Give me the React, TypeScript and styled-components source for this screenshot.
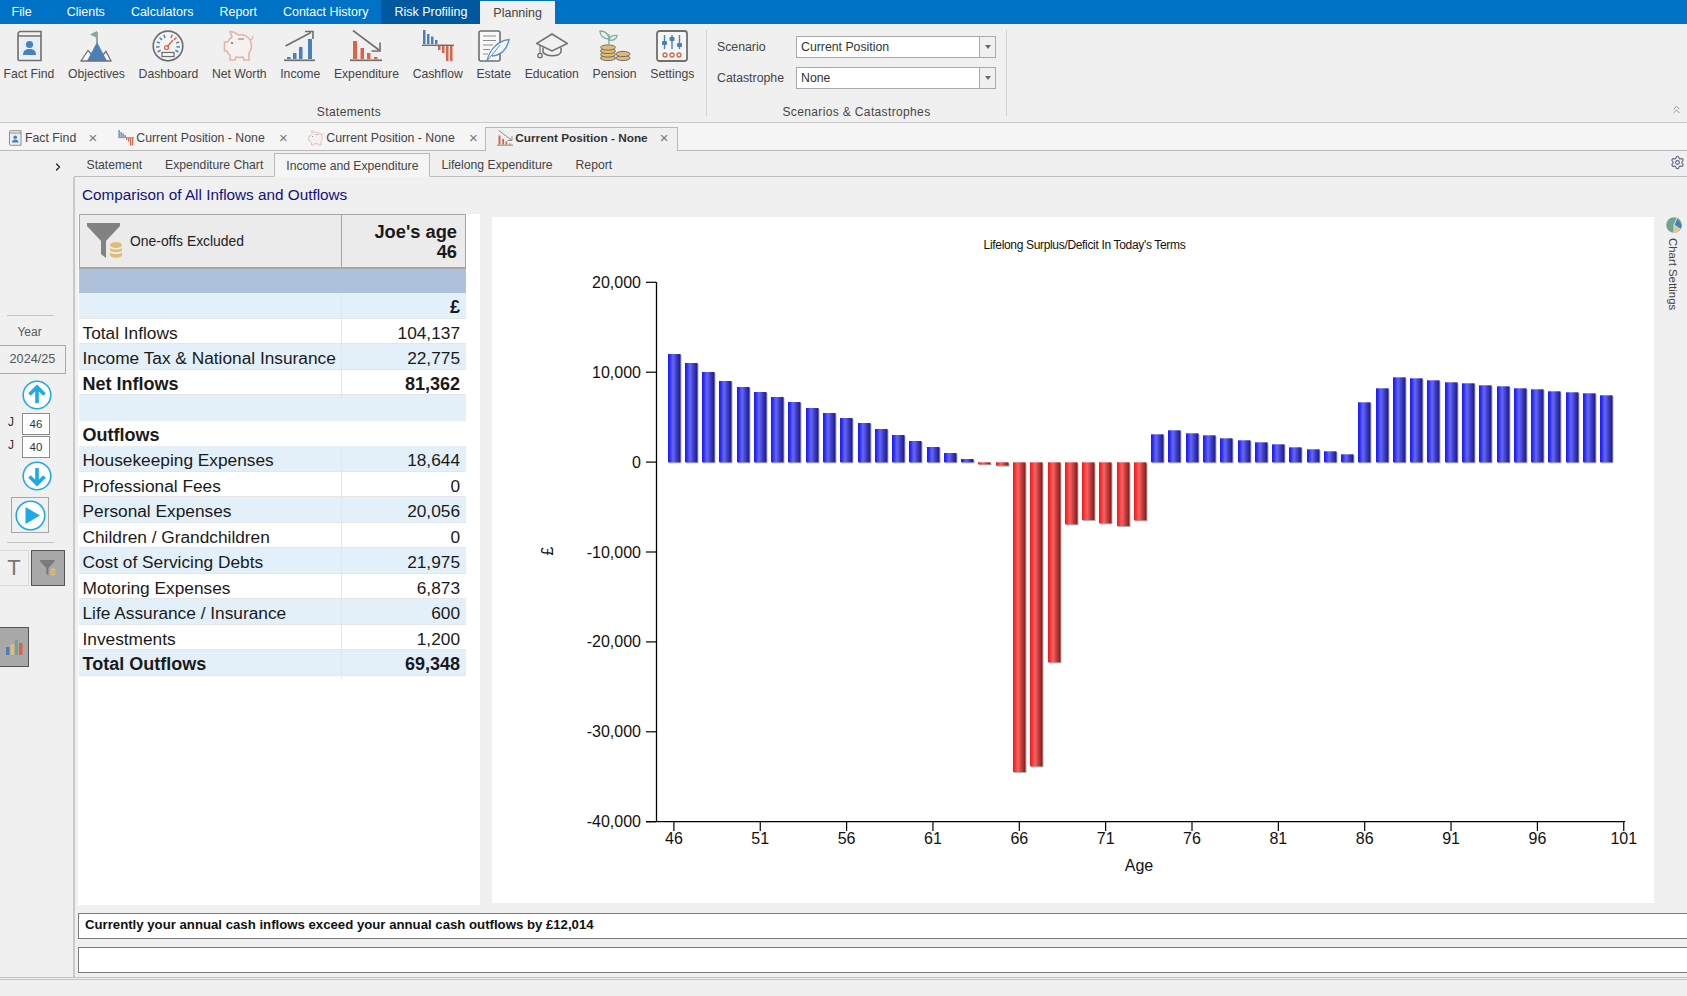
import React from 'react';
import styled, { createGlobalStyle } from 'styled-components';
import { ChevronRight, ChevronsUp, Settings as Gear } from 'lucide-react';

const Global = createGlobalStyle`
  html, body { margin: 0; padding: 0; background: #f0f0f0; overflow: hidden; }
  * { box-sizing: border-box; }
  body { font-family: "Liberation Sans", Arial, sans-serif; }
`;

const G = '#6f6f6f';
const B = '#4a80ba';
const R = '#d9644a';
const T = '#e2bb72';

type IP = { size?: number };
const Svg = ({ size = 32, children }: IP & { children: React.ReactNode }) => (
  <svg width={size} height={size} viewBox="0 0 32 32" fill="none" style={{ display: 'block', flex: 'none' }}>{children}</svg>
);

const FactFindIcon = ({ size }: IP) => (
  <Svg size={size}>
    <rect x="8" y="7" width="18" height="20" fill="#e6eef7" />
    <path d="M5 5.5V29a1.5 1.5 0 0 0 1.5 1.5H28V6H7.5A2.3 2.3 0 0 1 5 4a2.5 2.5 0 0 1 2.5-2.5H28V6" stroke={G} strokeWidth="1.6" />
    <circle cx="16.5" cy="14.5" r="3.6" fill={B} />
    <path d="M10 25c0-4.500 3-6 6.500-6s6.500 1.500 6.500 6z" fill={B} />
  </Svg>
);
const ObjectivesIcon = ({ size }: IP) => (
  <Svg size={size}>
    <path d="M17 2v11" stroke={G} strokeWidth="1.2" />
    <path d="M17 1L10 4.500L17 8z" fill="#7fa99a" />
    <path d="M1 31L8 20.500L12 25" fill="#fff" stroke={G} strokeWidth="1.3" />
    <path d="M31 31L26 21.500L23 25" fill="#fff" stroke={G} strokeWidth="1.3" />
    <path d="M17 12L7 31H27z" fill={B} />
    <path d="M0.500 31H31.500" stroke={G} strokeWidth="1.5" />
  </Svg>
);
const DashboardIcon = ({ size }: IP) => (
  <Svg size={size}>
    <circle cx="16" cy="16" r="14.800" fill="#f4f4f4" stroke={G} strokeWidth="1.7" />
    {[-120, -95, -70, -45, -20, 20, 45, 70, 95, 120].map((a) => (
      <path key={a} d="M16 4V7.500" stroke={a > 10 && a < 60 ? R : B} strokeWidth="1.5" transform={`rotate(${a} 16 16)`} />
    ))}
    <path d="M15 17L21 10" stroke={R} strokeWidth="1.4" />
    <circle cx="14.500" cy="17.500" r="2" stroke={R} strokeWidth="1.2" />
    <rect x="10" y="22.500" width="12" height="4" stroke={G} strokeWidth="1.3" fill="#fff" />
  </Svg>
);
const PiggyIcon = ({ size }: IP) => (
  <Svg size={size}>
    <path d="M1.500 12H4.500C5.500 10 7 8 9 7L7 1.500C10 1.500 13 3 15 5C20 4 25 6 27 10C29 14 29 19 26 23V30H21L20 27C18 27.500 15 27.500 13 27L12 30H7V25C5.500 24 4.500 22.500 4 21H1.500Z" stroke="#e4b2ae" strokeWidth="1.6" fill="#f6f0ef" />
    <path d="M15 9H21" stroke="#8a8a8a" strokeWidth="1.2" />
    <circle cx="9" cy="13" r="1" fill={G} />
    <path d="M27 10C29 10 30 8 29.500 6" stroke="#e4b2ae" strokeWidth="1.4" />
  </Svg>
);
const IncomeIcon = ({ size }: IP) => (
  <Svg size={size}>
    <path d="M1.500 16L27 2.500" stroke={G} strokeWidth="1.6" />
    <path d="M21 1.500H29V9" stroke={G} strokeWidth="1.6" />
    <rect x="3" y="27" width="3.500" height="2" fill={B} />
    <rect x="9" y="23" width="3.500" height="6" fill={B} />
    <rect x="15" y="17" width="3.500" height="12" fill={B} />
    <rect x="24" y="9" width="4" height="20" fill={B} />
    <path d="M0 30.300H31" stroke={G} strokeWidth="1.700" />
  </Svg>
);
const ExpenditureIcon = ({ size }: IP) => (
  <Svg size={size}>
    <path d="M3 0.500L29 20" stroke={G} strokeWidth="1.6" />
    <path d="M30 12.500V21H21.500" stroke={G} strokeWidth="1.6" />
    <rect x="3" y="11" width="4" height="18" fill={R} />
    <rect x="10.500" y="18" width="3.500" height="11" fill={R} />
    <rect x="17" y="23" width="3.500" height="6" fill={R} />
    <rect x="24" y="27" width="3.500" height="2" fill={R} />
    <path d="M0 30.300H32" stroke={G} strokeWidth="1.700" />
  </Svg>
);
const CashflowIcon = ({ size }: IP) => (
  <Svg size={size}>
    <rect x="1" y="0" width="2.500" height="14" fill={B} />
    <rect x="5" y="4" width="2.500" height="10" fill={B} />
    <rect x="9" y="6.500" width="2.500" height="7.500" fill={B} />
    <rect x="13" y="10" width="2.500" height="4" fill={B} />
    <path d="M0 15.300H32" stroke={G} strokeWidth="1.500" />
    <rect x="16" y="16" width="2.500" height="4" fill={R} />
    <rect x="20" y="16" width="2.500" height="7" fill={R} />
    <rect x="24" y="16" width="2.500" height="15" fill={R} />
    <rect x="28" y="16" width="2.500" height="15" fill={R} />
  </Svg>
);
const EstateIcon = () => (
  <Svg>
    <rect x="1" y="1" width="21" height="30" rx="2" stroke={G} strokeWidth="1.600" fill="#f8f8f8" />
    <path d="M5 6H18M5 10.500H18M5 15H15M5 19.500H12M5 24H10" stroke="#8c8c8c" strokeWidth="1.200" />
    <path d="M9 31C11 22 18 11 31 9.500C29 19 24 25 14 26" fill="#f4f7fb" stroke="#5a90c8" strokeWidth="1.300" />
    <path d="M9 31L22 15" stroke="#5a90c8" strokeWidth="1" />
  </Svg>
);
const EducationIcon = () => (
  <Svg>
    <path d="M16 4L31.500 13.500L16 21L0.500 13.500Z" stroke={G} strokeWidth="1.500" />
    <path d="M7 17.500V22C10 27 23 27 25 22V17.500" stroke={G} strokeWidth="1.500" />
    <path d="M4 15V23" stroke={G} strokeWidth="1.200" />
    <circle cx="4" cy="25.500" r="2.200" stroke={G} strokeWidth="1.300" />
  </Svg>
);
const Coin = ({ x, y, w }: { x: number; y: number; w: number }) => (
  <ellipse cx={x} cy={y} rx={w} ry="2.600" fill={T} stroke={G} strokeWidth="1" />
);
const PensionIcon = () => (
  <Svg>
    <path d="M10 14V4" stroke="#7fb09f" strokeWidth="1.400" />
    <path d="M10 9C10 4 6 1 1 1C1 5 4 9 10 9Z" stroke="#7fb09f" strokeWidth="1.400" />
    <path d="M10 10C10 7 14 5 18 5.500C18 9 14 11 10 10Z" stroke="#7fb09f" strokeWidth="1.400" />
    <Coin x={9} y={28} w={7.500} />
    <Coin x={9} y={24.500} w={7.500} />
    <Coin x={9} y={21} w={7.500} />
    <Coin x={9} y={17.500} w={7.500} />
    <Coin x={24} y={28} w={7} />
    <Coin x={24} y={24} w={7} />
  </Svg>
);
const SettingsIcon = () => (
  <Svg>
    <rect x="1" y="1" width="30" height="30" rx="2.500" stroke={G} strokeWidth="1.800" fill="#f6f6f6" />
    <path d="M8.500 5V19M16 5V19M23.500 5V19" stroke={B} strokeWidth="1.400" />
    <rect x="6" y="11" width="5" height="4" rx="1" fill={B} />
    <rect x="13.500" y="7" width="5" height="4" rx="1" fill={B} />
    <rect x="21" y="13" width="5" height="4" rx="1" fill={B} />
    <circle cx="9" cy="25" r="2" stroke={R} strokeWidth="1.300" />
    <circle cx="16" cy="25" r="2" stroke={R} strokeWidth="1.300" />
    <circle cx="23" cy="25" r="2" stroke={R} strokeWidth="1.300" />
  </Svg>
);

const FunnelIcon = ({ w, h, dark }: { w: number; h: number; dark?: boolean }) => (
  <svg width={w} height={h} viewBox="0 0 36 36" style={{ display: 'block', flex: 'none' }}>
    <path d="M0 0H33V3L19 18V35L14 31V18L0 3Z" fill={dark ? '#7a7a7a' : '#828282'} />
    <ellipse cx="29" cy="22" rx="6" ry="3" fill={T} />
    <path d="M23 25C25 27 33 27 35 25V27.500C33 29.500 25 29.500 23 27.500Z" fill={T} />
    <path d="M23 29.500C25 31.500 33 31.500 35 29.500V32.500C33 35.500 25 35.500 23 32.500Z" fill={T} />
  </svg>
);

const Root = styled.div`
  width: 1687px;
  height: 996px;
  display: flex;
  flex-direction: column;
  overflow: hidden;
  background: #f0f0f0;
  color: #333;
`;

const MenuBar = styled.nav`
  height: 24px;
  flex: none;
  background: #0072c6;
  display: flex;
  align-items: flex-end;
  font-size: 12.500px;
  color: #fff;
`;
const MenuItem = styled.div<{ $first?: boolean }>`
  height: 24px;
  line-height: 24px;
  padding: 0 13px;
  margin-left: ${(p) => (p.$first ? '-1.5px' : 0)};
  margin-right: ${(p) => (p.$first ? '9px' : 0)};
`;
const DarkMenu = styled(MenuItem)`
  background: #00589f;
  margin-left: 0;
`;
const ActiveMenu = styled(MenuItem)`
  height: 23px;
  line-height: 24px;
  background: #f0f0f0;
  color: #444;
`;

const Ribbon = styled.section`
  height: 99px;
  flex: none;
  display: flex;
  padding-top: 6px;
  background: #f0f0f0;
  border-bottom: 1px solid #c8c8c8;
  position: relative;
`;
const RibbonGroup = styled.div<{ $w: number }>`
  width: ${(p) => p.$w}px;
  height: 86px;
  display: flex;
  flex-direction: column;
  border-right: 1px solid #d2d2d2;
`;
const GroupBody = styled.div`
  flex: 1;
`;
const GroupLabel = styled.div<{ $shift?: number }>`
  font-size: 12px;
  line-height: 14px;
  height: 13px;
  text-align: center;
  color: #444;
  padding-right: ${(p) => p.$shift || 0}px;
  letter-spacing: 0.03em;
  transform: translateY(2px);
`;
const ButtonRow = styled.div`
  display: flex;
  gap: 13.700px;
  padding-left: 3.500px;
`;
const RibbonButton = styled.div`
  display: flex;
  flex-direction: column;
  align-items: center;
  font-size: 12.200px;
  line-height: 14px;
  color: #444;
  white-space: nowrap;
`;
const ButtonLabel = styled.span`
  margin-top: 5px;
`;
const FieldStack = styled.div`
  display: flex;
  flex-direction: column;
  gap: 9px;
  padding: 6px 0 0 10px;
`;
const Field = styled.div`
  display: flex;
  align-items: center;
  font-size: 12.300px;
  color: #444;
`;
const FieldLabel = styled.span`
  width: 79px;
`;
const Combo = styled.div`
  width: 200px;
  height: 22px;
  display: flex;
  background: #fff;
  border: 1px solid #a8a8a8;
  line-height: 20px;
  color: #333;
`;
const ComboText = styled.span`
  flex: 1;
  padding-left: 4px;
`;
const ComboArrow = styled.span`
  width: 16px;
  background: #f0f0f0;
  border-left: 1px solid #a8a8a8;
  display: flex;
  align-items: center;
  justify-content: center;
  &::before {
    content: '';
    border-left: 3px solid transparent;
    border-right: 3px solid transparent;
    border-top: 4px solid #666;
  }
`;
const Collapse = styled.div`
  position: absolute;
  right: 4px;
  bottom: 6px;
  color: #777;
  line-height: 0;
`;

const TabStrip = styled.div`
  height: 28px;
  flex: none;
  display: flex;
  align-items: flex-end;
  background: #f5f5f5;
  border-bottom: 1px solid #b8b8b8;
`;
const DocTab = styled.div<{ $first?: boolean }>`
  height: 23px;
  display: flex;
  align-items: center;
  padding: 0 ${(p) => (p.$first ? 12 : 11.500)}px 2px ${(p) => (p.$first ? 7 : 8)}px;
  font-size: 12.300px;
  color: #444;
  margin-right: 1px;
`;
const ActiveDocTab = styled(DocTab)`
  height: 24px;
  padding: 0 8px 3px 11px;
  margin-left: -5px;
  margin-bottom: -1px;
  background: #f0f0f0;
  border: 1px solid #b8b8b8;
  border-bottom: none;
  font-weight: bold;
  font-size: 11.800px;
  color: #333;
`;
const TabIcon = styled.span`
  width: 16px;
  margin-right: 2px;
  display: block;
`;
const Close = styled.span<{ $gap?: number }>`
  margin-left: ${(p) => p.$gap ?? 14}px;
  font-size: 15px;
  line-height: 14px;
  color: #777;
  font-weight: normal;
  width: 9px;
  text-align: center;
`;

const SubRow = styled.div`
  height: 26px;
  flex: none;
  display: flex;
  background: #f0f0f0;
`;
const ChevronSlot = styled.div`
  width: 74px;
  flex: none;
  padding: 8px 0 0 52px;
  color: #222;
`;
const SubTabs = styled.div`
  flex: 1;
  display: flex;
  align-items: flex-end;
  border-bottom: 1px solid #bdbdbd;
  font-size: 12.200px;
  color: #444;
  position: relative;
  padding-left: 1px;
`;
const SubTab = styled.div`
  height: 23px;
  line-height: 25px;
  padding: 0 11.500px;
`;
const ActiveSubTab = styled(SubTab)`
  height: 24px;
  margin: 0 -0.500px -1px;
  background: #f5f5f5;
  border: 1px solid #b8b8b8;
  border-bottom: 1px solid #f5f5f5;
  padding: 0 11px;
`;
const GearSlot = styled.div`
  position: absolute;
  right: 2px;
  top: 4px;
  color: #606a80;
  line-height: 0;
`;

const Body = styled.div`
  flex: 1;
  min-height: 0;
  display: flex;
`;
const Rail = styled.aside`
  width: 75px;
  flex: none;
  border-right: 2px solid #c9c9c9;
  display: flex;
  flex-direction: column;
  padding-top: 138px;
`;
const RailRule = styled.div<{ $top?: number }>`
  width: 47px;
  height: 1px;
  margin: ${(p) => p.$top || 0}px 0 0 7px;
  background: #c4c4c4;
`;
const YearLabel = styled.div`
  width: 59px;
  text-align: center;
  font-size: 12px;
  line-height: 14px;
  margin-top: 9px;
  color: #555;
`;
const YearBox = styled.div`
  width: 66px;
  height: 29px;
  margin-top: 6px;
  border: 1px solid #a8a8a8;
  border-left: none;
  text-align: center;
  font-size: 12.700px;
  line-height: 27px;
  color: #555;
`;
const RoundButton = styled.div<{ $top: number }>`
  margin: ${(p) => p.$top}px 0 0 22px;
  width: 30px;
  height: 30px;
`;
const AgeRows = styled.div`
  margin-top: 2px;
`;
const AgeRow = styled.div`
  display: flex;
  align-items: center;
  height: 23px;
  font-size: 12px;
  color: #333;
`;
const AgeLetter = styled.span`
  width: 22px;
  padding-left: 8px;
  margin-top: -3px;
`;
const AgeBox = styled.div`
  width: 28px;
  height: 22px;
  border: 1px solid #8c8c8c;
  background: #fff;
  font-size: 11.500px;
  line-height: 20px;
  text-align: center;
`;
const PlayBox = styled.div`
  width: 38px;
  height: 36px;
  margin: 6px 0 0 11px;
  border: 1px solid #a6a6a6;
  display: flex;
  align-items: center;
  justify-content: center;
`;
const RailButtons = styled.div`
  display: flex;
  gap: 2px;
  margin-top: 7px;
  height: 36px;
`;
const TextToggle = styled.div`
  width: 29px;
  border: 1px solid #dadada;
  border-left: none;
  font-size: 22px;
  line-height: 34px;
  text-align: center;
  color: #777;
`;
const FilterToggle = styled.div`
  width: 34px;
  background: #a8a8a8;
  border: 1px solid #555;
  display: flex;
  align-items: center;
  justify-content: center;
`;
const ChartToggle = styled.div`
  width: 29px;
  height: 40px;
  margin-top: 41px;
  background: #a8a8a8;
  border: 1px solid #555;
  border-left: none;
  display: flex;
  align-items: center;
  justify-content: center;
`;

const Main = styled.main`
  flex: 1;
  min-width: 0;
  padding-left: 3px;
  overflow: hidden;
  display: flex;
  flex-direction: column;
`;
const Heading = styled.h1`
  margin: 0;
  height: 37px;
  flex: none;
  padding: 9px 0 0 4px;
  font-size: 15.300px;
  font-weight: normal;
  line-height: 18px;
  color: #12107e;
`;
const ContentRow = styled.div`
  height: 691px;
  flex: none;
  display: flex;
`;
const TablePanel = styled.div`
  width: 402px;
  flex: none;
  background: #fff;
  padding-left: 1px;
`;
const DataTable = styled.div`
  width: 387px;
`;
const HeaderRow = styled.div`
  display: grid;
  grid-template-columns: 262px 1fr;
  height: 55px;
  background: #ebebeb;
  border: 1px solid #a6a6a6;
  border-bottom-width: 2px;
`;
const FilterCell = styled.div`
  display: flex;
  align-items: center;
  gap: 7px;
  padding-left: 7px;
  border-right: 1px solid #a6a6a6;
  font-size: 13.900px;
  color: #222;
`;
const AgeCell = styled.div`
  text-align: right;
  padding: 7px 8px 0 0;
  font-size: 18.300px;
  line-height: 19.500px;
  font-weight: bold;
  color: #1a1a1a;
`;
const Band = styled.div`
  height: 24px;
  background: #aec1da;
`;
const Row = styled.div<{ $alt?: boolean; $bold?: boolean; $plain?: boolean }>`
  display: grid;
  grid-template-columns: 263px 124px;
  height: 25.500px;
  line-height: 29px;
  font-size: ${(p) => (p.$bold ? 18 : 17.300)}px;
  font-weight: ${(p) => (p.$bold ? 'bold' : 'normal')};
  color: #1a1a1a;
  background: ${(p) => (p.$alt ? '#e3f0f9' : '#fff')};
  border-bottom: 1px solid ${(p) => (p.$plain ? 'transparent' : '#e6e6e6')};
`;
const LabelCell = styled.div<{ $plain?: boolean }>`
  padding-left: 3.500px;
  border-right: 1px solid ${(p) => (p.$plain ? 'transparent' : '#e6e6e6')};
  white-space: nowrap;
`;
const ValueCell = styled.div`
  text-align: right;
  padding-right: 6px;
`;

const ChartPanel = styled.div`
  width: 1162px;
  height: 686px;
  margin: 3px 0 0 12px;
  flex: none;
  background: #fff;
`;
const SideStrip = styled.div`
  flex: none;
  width: 33px;
  padding: 3px 0 0 7px;
  display: flex;
  flex-direction: column;
  align-items: center;
  gap: 5px;
`;
const SideText = styled.span`
  writing-mode: vertical-rl;
  font-size: 11.400px;
  color: #444;
  margin-right: 2px;
`;
const MessageBox = styled.div<{ $top: number }>`
  width: calc(100% + 10px);
  height: 26px;
  flex: none;
  margin-top: ${(p) => p.$top}px;
  background: #fff;
  border: 1px solid #7a7a7a;
  font-size: 13.200px;
  line-height: 22px;
  font-weight: bold;
  color: #111;
  padding-left: 6px;
`;

const Footer = styled.footer`
  height: 19px;
  flex: none;
  border-top: 3px double #c4c4c4;
`;

const ArrowCircle = ({ dir }: { dir: 'up' | 'down' }) => (
  <svg width="30" height="30" viewBox="0 0 30 30" style={{ display: 'block' }}>
    <circle cx="15" cy="15" r="13.800" fill="#fff" stroke="#1ea9ea" strokeWidth="1.600" />
    <path
      d={dir === 'up' ? 'M15 23V8M7.500 14.500L15 7L22.500 14.500' : 'M15 7V22M7.500 15.500L15 23L22.500 15.500'}
      fill="none"
      stroke="#1ea9ea"
      strokeWidth="3.600"
    />
  </svg>
);
const PlayCircle = () => (
  <svg width="31" height="31" viewBox="0 0 31 31" style={{ display: 'block' }}>
    <circle cx="15.500" cy="15.500" r="14.300" fill="#fff" stroke="#1ea9ea" strokeWidth="1.600" />
    <path d="M10.500 7L25 15.500L10.500 24Z" fill="#1ea9ea" />
  </svg>
);
const MiniBars = () => (
  <svg width="17" height="15" viewBox="0 0 17 15" style={{ display: 'block' }}>
    <rect x="0" y="7" width="3.500" height="8" fill="#4a80ba" />
    <rect x="4.500" y="4" width="3.500" height="11" fill="#e2bb72" />
    <rect x="9" y="0" width="3" height="15" fill="#6fa68f" />
    <rect x="13" y="3" width="3.500" height="12" fill="#d9644a" />
  </svg>
);
const PieIcon = () => (
  <svg width="16" height="16" viewBox="0 0 16 16" style={{ display: 'block' }}>
    <circle cx="8" cy="8" r="7.800" fill="#6fa58f" />
    <path d="M8.500 8L11 1L15.800 8.500L14.500 12Z" fill="#4a80ba" />
    <path d="M8.300 8.500L14 12.500C13 14.500 11 15.800 8.300 15.800Z" fill="#e9c67e" />
    <path d="M8 8L11 1M8 8L14.500 12.300M8 8V15.800" stroke="#f4f4f4" strokeWidth="0.800" />
  </svg>
);

const pos = [108.3, 99.3, 90.3, 81.3, 75.3, 70.3, 65.3, 60.3, 54.3, 49.3, 44.3, 39.3, 33.3, 27.3, 21.3, 15.3, 9.3, 3.3];
const neg = [2, 3.3, 309.7, 304, 200, 62, 57.7, 61, 63.7, 58];
const tail = [28, 32, 29, 27, 24, 22, 20, 18, 15, 13, 11, 8, 60, 74, 85, 84, 82, 80, 79, 77, 76, 74, 73, 71, 70, 69, 67];
const bars = [...pos, ...neg.map((v) => -v), ...tail];

const ZERO = 462.3;
const X0 = 673.9;
const STEP = 17.27;

const Chart = () => (
  <svg width="1162" height="686" viewBox="492 217 1162 686" style={{ display: 'block' }}>
    <defs>
      <linearGradient id="blueBar" x1="0" x2="1" y1="0" y2="0">
        <stop offset="0" stopColor="#1a1ae8" />
        <stop offset="0.15" stopColor="#2c2cff" />
        <stop offset="0.4" stopColor="#6868f4" />
        <stop offset="0.7" stopColor="#3a3ac4" />
        <stop offset="1" stopColor="#1a1a88" />
      </linearGradient>
      <linearGradient id="redBar" x1="0" x2="1" y1="0" y2="0">
        <stop offset="0" stopColor="#e81a1a" />
        <stop offset="0.15" stopColor="#ff2c2c" />
        <stop offset="0.4" stopColor="#f46464" />
        <stop offset="0.7" stopColor="#c03a3a" />
        <stop offset="1" stopColor="#861a1a" />
      </linearGradient>
    </defs>
    <text x="1084.500" y="249" textAnchor="middle" fontSize="12" letterSpacing="-0.33" fill="#111" fontFamily="Liberation Sans">
      Lifelong Surplus/Deficit In Today's Terms
    </text>
    {bars.map((v, i) => {
      const cx = X0 + i * STEP;
      const x = Math.round(cx - 6.3);
      const w = 12.5;
      const y = v > 0 ? ZERO - v : ZERO;
      const h = Math.abs(v);
      return (
        <g key={i}>
          <rect x={x + 1} y={y + 1} width={w} height={h} fill="#b0b0b0" />
          <rect x={x} y={y} width={w} height={h} fill={v > 0 ? 'url(#blueBar)' : 'url(#redBar)'} />
        </g>
      );
    })}
    <path d="M656.500 282V822M646 821.700H1625" stroke="#000" strokeWidth="1.300" fill="none" />
    {[20000, 10000, 0, -10000, -20000, -30000, -40000].map((v, i) => {
      const y = 282.3 + i * 89.9;
      return (
        <g key={v}>
          <path d={`M646 ${y}H656`} stroke="#000" strokeWidth="1.200" />
          <text x="641" y={y + 5.5} textAnchor="end" fontSize="16" fill="#111" fontFamily="Liberation Sans">
            {v.toLocaleString('en-GB')}
          </text>
        </g>
      );
    })}
    {Array.from({ length: 12 }, (_, i) => {
      const x = X0 + i * 5 * STEP;
      return (
        <g key={i}>
          <path d={`M${x} 822V831`} stroke="#000" strokeWidth="1.200" />
          <text x={x} y="843.500" textAnchor="middle" fontSize="16" fill="#111" fontFamily="Liberation Sans">
            {46 + i * 5}
          </text>
        </g>
      );
    })}
    <text x="1139" y="870.500" textAnchor="middle" fontSize="16" fill="#111" fontFamily="Liberation Sans">
      Age
    </text>
    <text x="553" y="551" textAnchor="middle" fontSize="16" fill="#111" fontFamily="Liberation Sans" transform="rotate(-90 553 551)">
      £
    </text>
  </svg>
);

const rows: { label: string; value: string; bold?: boolean; plain?: boolean }[] = [
  { label: '', value: '£', bold: true },
  { label: 'Total Inflows', value: '104,137' },
  { label: 'Income Tax & National Insurance', value: '22,775' },
  { label: 'Net Inflows', value: '81,362', bold: true },
  { label: '', value: '', plain: true },
  { label: 'Outflows', value: '', bold: true, plain: true },
  { label: 'Housekeeping Expenses', value: '18,644' },
  { label: 'Professional Fees', value: '0' },
  { label: 'Personal Expenses', value: '20,056' },
  { label: 'Children / Grandchildren', value: '0' },
  { label: 'Cost of Servicing Debts', value: '21,975' },
  { label: 'Motoring Expenses', value: '6,873' },
  { label: 'Life Assurance / Insurance', value: '600' },
  { label: 'Investments', value: '1,200' },
  { label: 'Total Outflows', value: '69,348', bold: true },
];

const ribbonItems: [string, React.ReactNode][] = [
  ['Fact Find', <FactFindIcon />],
  ['Objectives', <ObjectivesIcon />],
  ['Dashboard', <DashboardIcon />],
  ['Net Worth', <PiggyIcon />],
  ['Income', <IncomeIcon />],
  ['Expenditure', <ExpenditureIcon />],
  ['Cashflow', <CashflowIcon />],
  ['Estate', <EstateIcon />],
  ['Education', <EducationIcon />],
  ['Pension', <PensionIcon />],
  ['Settings', <SettingsIcon />],
];

export default function App() {
  return (
    <Root>
      <Global />
      <MenuBar>
        <MenuItem $first>File</MenuItem>
        <MenuItem>Clients</MenuItem>
        <MenuItem>Calculators</MenuItem>
        <MenuItem>Report</MenuItem>
        <MenuItem>Contact History</MenuItem>
        <DarkMenu>Risk Profiling</DarkMenu>
        <ActiveMenu>Planning</ActiveMenu>
      </MenuBar>

      <Ribbon>
        <RibbonGroup $w={707}>
          <GroupBody>
            <ButtonRow>
              {ribbonItems.map(([label, icon]) => (
                <RibbonButton key={label}>
                  {icon}
                  <ButtonLabel>{label}</ButtonLabel>
                </RibbonButton>
              ))}
            </ButtonRow>
          </GroupBody>
          <GroupLabel $shift={8}>Statements</GroupLabel>
        </RibbonGroup>
        <RibbonGroup $w={300}>
          <GroupBody>
            <FieldStack>
              <Field>
                <FieldLabel>Scenario</FieldLabel>
                <Combo>
                  <ComboText>Current Position</ComboText>
                  <ComboArrow />
                </Combo>
              </Field>
              <Field>
                <FieldLabel>Catastrophe</FieldLabel>
                <Combo>
                  <ComboText>None</ComboText>
                  <ComboArrow />
                </Combo>
              </Field>
            </FieldStack>
          </GroupBody>
          <GroupLabel>Scenarios &amp; Catastrophes</GroupLabel>
        </RibbonGroup>
        <Collapse>
          <ChevronsUp size={13} strokeWidth={1.4} />
        </Collapse>
      </Ribbon>

      <TabStrip>
        <DocTab $first>
          <TabIcon><FactFindIcon size={16} /></TabIcon>
          Fact Find
          <Close $gap={12}>×</Close>
        </DocTab>
        <DocTab>
          <TabIcon><CashflowIcon size={16} /></TabIcon>
          Current Position - None
          <Close>×</Close>
        </DocTab>
        <DocTab>
          <TabIcon><PiggyIcon size={16} /></TabIcon>
          Current Position - None
          <Close>×</Close>
        </DocTab>
        <ActiveDocTab>
          <TabIcon><ExpenditureIcon size={16} /></TabIcon>
          Current Position - None
          <Close $gap={12}>×</Close>
        </ActiveDocTab>
      </TabStrip>

      <SubRow>
        <ChevronSlot>
          <ChevronRight size={12} strokeWidth={2.6} />
        </ChevronSlot>
        <SubTabs>
          <SubTab>Statement</SubTab>
          <SubTab>Expenditure Chart</SubTab>
          <ActiveSubTab>Income and Expenditure</ActiveSubTab>
          <SubTab>Lifelong Expenditure</SubTab>
          <SubTab>Report</SubTab>
          <GearSlot>
            <Gear size={15} strokeWidth={1.8} />
          </GearSlot>
        </SubTabs>
      </SubRow>

      <Body>
        <Rail>
          <RailRule />
          <YearLabel>Year</YearLabel>
          <YearBox>2024/25</YearBox>
          <RoundButton $top={6}><ArrowCircle dir="up" /></RoundButton>
          <AgeRows>
            <AgeRow>
              <AgeLetter>J</AgeLetter>
              <AgeBox>46</AgeBox>
            </AgeRow>
            <AgeRow>
              <AgeLetter>J</AgeLetter>
              <AgeBox>40</AgeBox>
            </AgeRow>
          </AgeRows>
          <RoundButton $top={3}><ArrowCircle dir="down" /></RoundButton>
          <PlayBox><PlayCircle /></PlayBox>
          <RailRule $top={9} />
          <RailButtons>
            <TextToggle>T</TextToggle>
            <FilterToggle><FunnelIcon w={16} h={16} dark /></FilterToggle>
          </RailButtons>
          <ChartToggle><MiniBars /></ChartToggle>
        </Rail>

        <Main>
          <Heading>Comparison of All Inflows and Outflows</Heading>
          <ContentRow>
            <TablePanel>
              <DataTable>
                <HeaderRow>
                  <FilterCell>
                    <FunnelIcon w={36} h={36} />
                    One-offs Excluded
                  </FilterCell>
                  <AgeCell>
                    Joe's age
                    <br />
                    46
                  </AgeCell>
                </HeaderRow>
                <Band />
                {rows.map((r, i) => (
                  <Row key={i} $alt={i % 2 === 0} $bold={r.bold} $plain={r.plain}>
                    <LabelCell $plain={r.plain}>{r.label}</LabelCell>
                    <ValueCell>{r.value}</ValueCell>
                  </Row>
                ))}
              </DataTable>
            </TablePanel>
            <ChartPanel>
              <Chart />
            </ChartPanel>
            <SideStrip>
              <PieIcon />
              <SideText>Chart Settings</SideText>
            </SideStrip>
          </ContentRow>
          <MessageBox $top={8}>Currently your annual cash inflows exceed your annual cash outflows by £12,014</MessageBox>
          <MessageBox $top={8} />
        </Main>
      </Body>
      <Footer />
    </Root>
  );
}
